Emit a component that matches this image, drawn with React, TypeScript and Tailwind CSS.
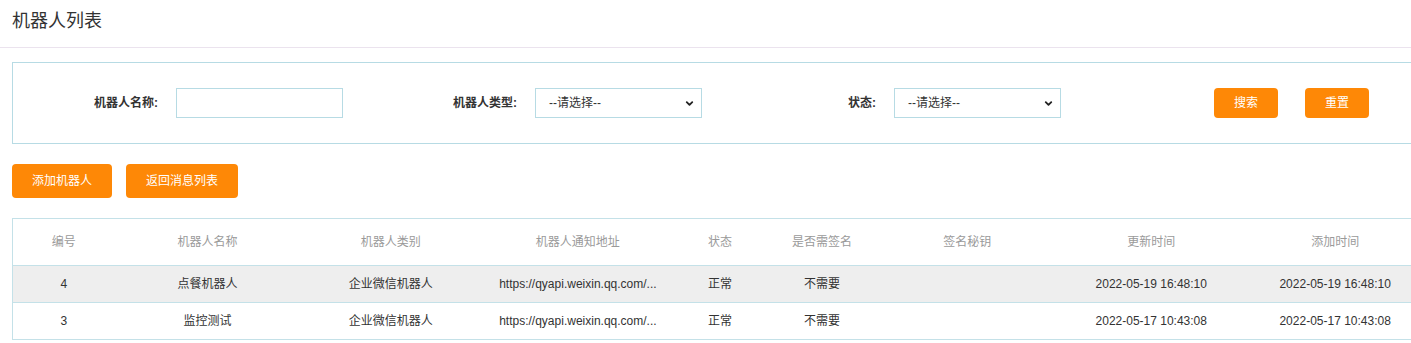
import { ChevronDown } from 'lucide-react';

const font = { fontFamily: '"Liberation Sans", "Noto Sans CJK SC", sans-serif' };

const columns = [
  { title: '编号', w: 'w-[102px]' },
  { title: '机器人名称', w: 'w-[186px]' },
  { title: '机器人类别', w: 'w-[180px]' },
  { title: '机器人通知地址', w: 'w-[194px]' },
  { title: '状态', w: 'w-[90px]' },
  { title: '是否需签名', w: 'w-[114px]' },
  { title: '签名秘钥', w: 'w-[176px]' },
  { title: '更新时间', w: 'w-[192px]' },
  { title: '添加时间', w: 'w-[176px]' },
];

const rows = [
  ['4', '点餐机器人', '企业微信机器人', 'https://qyapi.weixin.qq.com/...', '正常', '不需要', '', '2022-05-19 16:48:10', '2022-05-19 16:48:10'],
  ['3', '监控测试', '企业微信机器人', 'https://qyapi.weixin.qq.com/...', '正常', '不需要', '', '2022-05-17 10:43:08', '2022-05-17 10:43:08'],
];

const Select = () => (
  <div className="relative w-[167px] h-[30px] border border-[#b7dbe4] bg-white flex items-center pl-[13px] text-xs text-[#333]">
    --请选择--
    <ChevronDown className="absolute right-[6px] top-[9px] w-[11px] h-[11px] text-[#222]" strokeWidth={4} />
  </div>
);

const Field = ({ label, children }: { label: string; children: React.ReactNode }) => (
  <div className="w-[359px] flex items-center">
    <label className="w-[145px] text-right text-xs font-bold text-[#333]">{label}</label>
    <div className="ml-[18px]">{children}</div>
  </div>
);

const OrangeButton = ({ children, className = '' }: { children: React.ReactNode; className?: string }) => (
  <button className={`bg-[#fe8806] text-white text-xs rounded-[4px] ${className}`}>{children}</button>
);

export default function App() {
  return (
    <div className="w-[1411px] h-[343px] overflow-hidden bg-white" style={font}>
      <div className="w-[1440px]">
        <div className="h-[48px] border-b border-[#ebe3ee] px-3 flex items-center">
          <h1 className="text-[18px] text-[#333] pb-[5px]">机器人列表</h1>
        </div>

        <div className="ml-3 mt-[14px] h-[82px] border border-[#b7dbe4] flex items-center">
          <Field label="机器人名称:">
            <input className="w-[167px] h-[30px] border border-[#b7dbe4] outline-none" />
          </Field>
          <Field label="机器人类型:">
            <Select />
          </Field>
          <Field label="状态:">
            <Select />
          </Field>
          <div className="ml-[124px] flex gap-[27px]">
            <OrangeButton className="w-[64px] h-[30px]">搜索</OrangeButton>
            <OrangeButton className="w-[64px] h-[30px]">重置</OrangeButton>
          </div>
        </div>

        <div className="ml-3 mt-[20px] flex gap-[14px]">
          <OrangeButton className="h-[34px] px-5">添加机器人</OrangeButton>
          <OrangeButton className="h-[34px] px-5">返回消息列表</OrangeButton>
        </div>

        <table className="ml-3 mt-[20px] border border-[#c4e1e8] border-collapse table-fixed w-[1412px] text-xs">
          <thead>
            <tr className="h-[47px]">
              {columns.map((c) => (
                <th key={c.title} className={`${c.w} font-normal text-[#9a9a9a] text-center`}>
                  {c.title}
                </th>
              ))}
            </tr>
          </thead>
          <tbody>
            {rows.map((r, i) => (
              <tr key={i} className={`h-[37px] border-t border-[#c4e1e8] ${i === 0 ? 'bg-[#eeeeee]' : 'bg-white'}`}>
                {r.map((cell, j) => (
                  <td key={j} className="text-center text-[#333] whitespace-nowrap overflow-hidden">
                    {cell}
                  </td>
                ))}
              </tr>
            ))}
          </tbody>
        </table>
      </div>
    </div>
  );
}
